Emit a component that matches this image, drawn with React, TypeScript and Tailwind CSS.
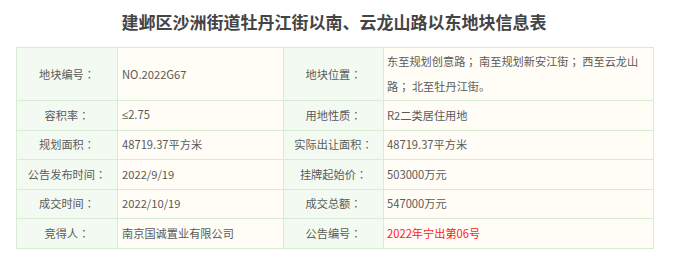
// full-width colon / semicolon drawn centred, as in the reference
const P = ({ c }: { c: string }) => (
  <span style={{ fontFamily: '"Noto Sans CJK TC", sans-serif' }}>{c}</span>
);

const rows: [string, React.ReactNode, string, React.ReactNode][] = [
  [
    "地块编号",
    "NO.2022G67",
    "地块位置",
    <>
      东至规划创意路<P c="；" /> 南至规划新安江街<P c="；" /> 西至云龙山
      <br />
      路<P c="；" /> 北至牡丹江街。
    </>,
  ],
  [
    "容积率",
    <>
      <span style={{ fontFamily: '"Liberation Sans", sans-serif' }}>≤</span>2.75
    </>,
    "用地性质",
    "R2二类居住用地",
  ],
  ["规划面积", "48719.37平方米", "实际出让面积", "48719.37平方米"],
  ["公告发布时间", "2022/9/19", "挂牌起始价", "503000万元"],
  ["成交时间", "2022/10/19", "成交总额", "547000万元"],
  [
    "竞得人",
    "南京国诚置业有限公司",
    "公告编号",
    <span className="text-[#ff1a1a]">2022年宁出第06号</span>,
  ],
];

export default function App() {
  return (
    <div
      className="w-[700px] h-[265px] bg-white text-[#5a5a5a]"
      style={{ fontFamily: '"Noto Sans CJK SC", "Liberation Sans", sans-serif' }}
    >
      {/* Title */}
      <h1 className="pt-[9px] pr-[32px] h-[47px] text-center text-[17px] font-bold text-[#444] leading-[26px]">
        建邺区沙洲街道牡丹江街以南、云龙山路以东地块信息表
      </h1>

      {/* Info table */}
      <table className="ml-[16px] w-[637px] border-collapse table-fixed text-[11.2px]">
        <colgroup>
          <col className="w-[101px]" />
          <col className="w-[166px]" />
          <col className="w-[100px]" />
          <col className="w-[270px]" />
        </colgroup>
        <tbody>
          {rows.map(([l1, v1, l2, v2], i) => (
            <tr key={i} className={i === 0 ? "h-[53px]" : "h-[29.5px]"}>
              <td className="border border-[#d8ebd5] bg-[#f3faf2] text-center p-0">
                {l1}
                <P c="：" />
              </td>
              <td className="border border-[#d8ebd5] bg-[#fffdf6] pl-[4px] p-0">{v1}</td>
              <td className="border border-[#d8ebd5] bg-[#f3faf2] text-center p-0">
                {l2}
                <P c="：" />
              </td>
              <td className="border border-[#d8ebd5] bg-[#fffdf6] pl-[3px] p-0 leading-[25px] whitespace-nowrap">
                {v2}
              </td>
            </tr>
          ))}
        </tbody>
      </table>
    </div>
  );
}
